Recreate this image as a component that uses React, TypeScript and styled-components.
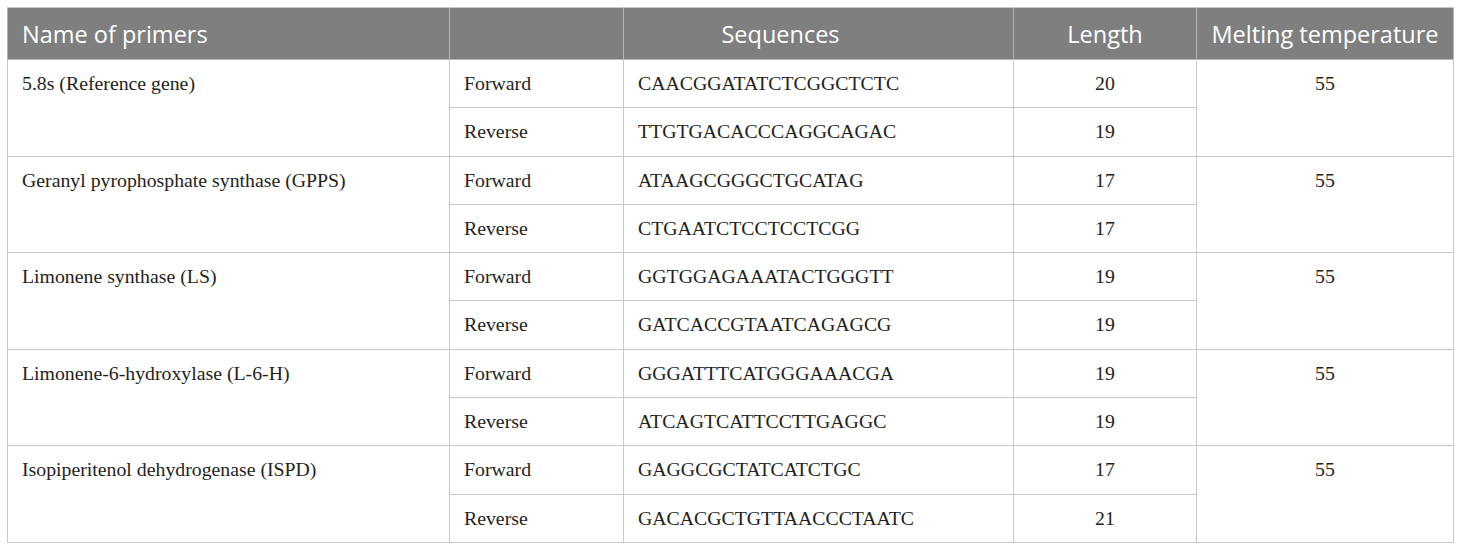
import React from "react";
import styled, { createGlobalStyle } from "styled-components";

const GlobalStyle = createGlobalStyle`
  html, body { margin: 0; padding: 0; background: #ffffff; }
  body { padding: 7px 0 0 7px; }
`;

const Table = styled.table`
  border-collapse: collapse;
  table-layout: fixed;
  width: 1446px;
  border: 1px solid #c9c9c9;
`;

const HeadRow = styled.tr`
  height: 52px;
  background: #7f7f7f;
`;

const Th = styled.th<{ $align?: "left" | "center"; $shift?: number }>`
  border: 1px solid #b5b5b5;
  border-top-color: #c9c9c9;
  padding: 0 14px;
  padding-right: ${(p) => 14 + (p.$shift ?? 0)}px;
  font-family: "Open Sans", "Noto Sans", sans-serif;
  font-weight: 400;
  font-size: 23.5px;
  color: #ffffff;
  text-align: ${(p) => p.$align ?? "center"};
  vertical-align: middle;
  white-space: nowrap;
`;

const BodyRow = styled.tr`
  height: 48.3px;
`;

const Td = styled.td<{ $align?: "left" | "center" }>`
  border: 1px solid #c9c9c9;
  padding: 11px 14px 0 14px;
  font-family: "Liberation Serif", "Times New Roman", serif;
  font-size: 19.8px;
  line-height: 24px;
  color: #231f20;
  text-align: ${(p) => p.$align ?? "left"};
  vertical-align: top;
  white-space: nowrap;
`;

type Primer = {
  name: string;
  fwd: string;
  fwdLen: number;
  rev: string;
  revLen: number;
  tm: number;
};

const primers: Primer[] = [
  { name: "5.8s (Reference gene)", fwd: "CAACGGATATCTCGGCTCTC", fwdLen: 20, rev: "TTGTGACACCCAGGCAGAC", revLen: 19, tm: 55 },
  { name: "Geranyl pyrophosphate synthase (GPPS)", fwd: "ATAAGCGGGCTGCATAG", fwdLen: 17, rev: "CTGAATCTCCTCCTCGG", revLen: 17, tm: 55 },
  { name: "Limonene synthase (LS)", fwd: "GGTGGAGAAATACTGGGTT", fwdLen: 19, rev: "GATCACCGTAATCAGAGCG", revLen: 19, tm: 55 },
  { name: "Limonene-6-hydroxylase (L-6-H)", fwd: "GGGATTTCATGGGAAACGA", fwdLen: 19, rev: "ATCAGTCATTCCTTGAGGC", revLen: 19, tm: 55 },
  { name: "Isopiperitenol dehydrogenase (ISPD)", fwd: "GAGGCGCTATCATCTGC", fwdLen: 17, rev: "GACACGCTGTTAACCCTAATC", revLen: 21, tm: 55 },
];

export default function App() {
  return (
    <>
      <GlobalStyle />
      <Table>
        <colgroup>
          <col style={{ width: 442 }} />
          <col style={{ width: 174 }} />
          <col style={{ width: 390 }} />
          <col style={{ width: 183 }} />
          <col style={{ width: 257 }} />
        </colgroup>
        <thead>
          <HeadRow>
            <Th $align="left">Name of primers</Th>
            <Th />
            <Th $shift={76}>Sequences</Th>
            <Th>Length</Th>
            <Th>Melting temperature</Th>
          </HeadRow>
        </thead>
        <tbody>
          {primers.map((p) => (
            <React.Fragment key={p.name}>
              <BodyRow>
                <Td rowSpan={2}>{p.name}</Td>
                <Td>Forward</Td>
                <Td>{p.fwd}</Td>
                <Td $align="center">{p.fwdLen}</Td>
                <Td rowSpan={2} $align="center">{p.tm}</Td>
              </BodyRow>
              <BodyRow>
                <Td>Reverse</Td>
                <Td>{p.rev}</Td>
                <Td $align="center">{p.revLen}</Td>
              </BodyRow>
            </React.Fragment>
          ))}
        </tbody>
      </Table>
    </>
  );
}
